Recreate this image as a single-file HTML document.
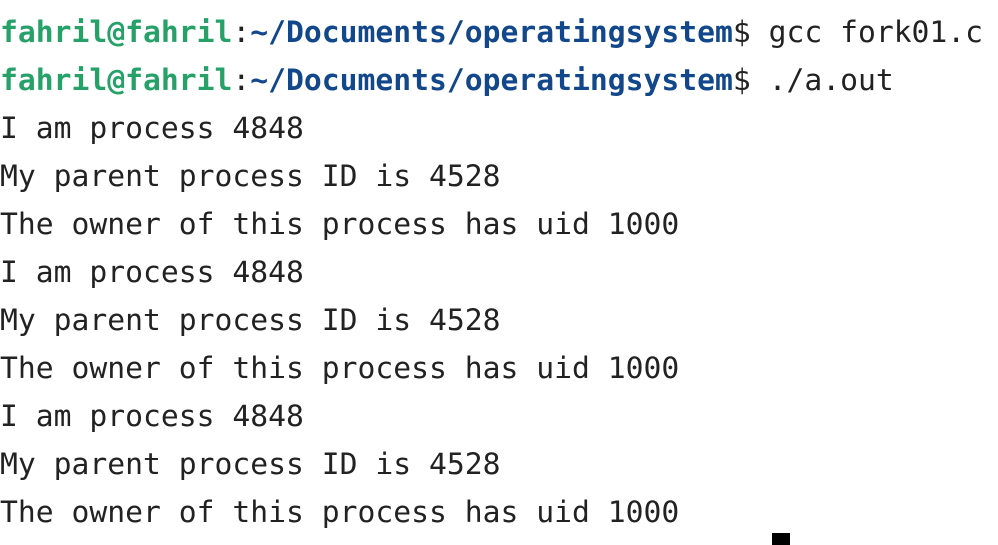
<!DOCTYPE html>
<html><head><meta charset="utf-8"><style>
html,body{margin:0;padding:0;background:#fff;width:998px;height:542px;overflow:hidden}
pre{position:absolute;left:0;top:9px;margin:0;font-family:"DejaVu Sans Mono","Liberation Mono",monospace;font-size:29.7px;line-height:48px;color:#222}
.g{color:#26a269;font-weight:bold}.b{color:#12488b;font-weight:bold}
.cur{position:absolute;left:772px;top:533px;width:18px;height:12px;background:#000}
</style></head><body>
<pre><span class="g">fahril@fahril</span>:<span class="b">~/Documents/operatingsystem</span>$ gcc fork01.c
<span class="g">fahril@fahril</span>:<span class="b">~/Documents/operatingsystem</span>$ ./a.out
I am process 4848
My parent process ID is 4528
The owner of this process has uid 1000
I am process 4848
My parent process ID is 4528
The owner of this process has uid 1000
I am process 4848
My parent process ID is 4528
The owner of this process has uid 1000</pre>
<div class="cur"></div>
</body></html>
